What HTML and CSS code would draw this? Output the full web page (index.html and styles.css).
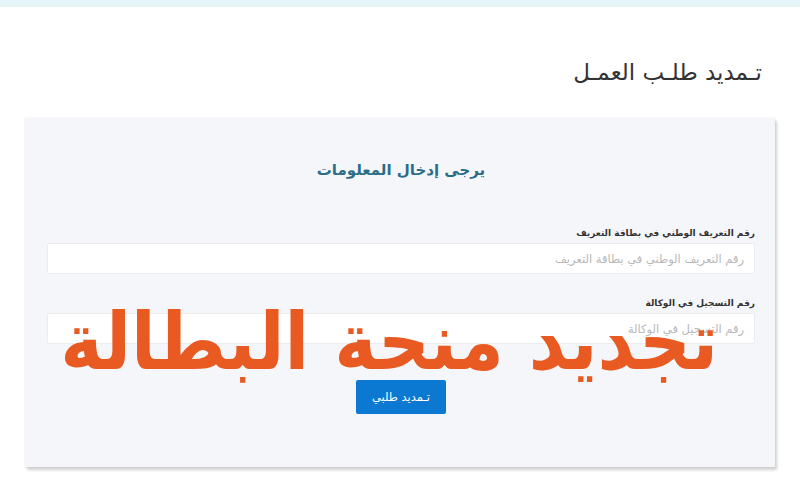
FILE: index.html
```html
<!DOCTYPE html>
<html lang="ar" dir="rtl">
<head>
<meta charset="utf-8">
<title>تمديد طلب العمل</title>
<link rel="stylesheet" href="styles.css">
</head>
<body>
<div class="topband"></div>
<main class="page">
  <h1 class="title">تـمديد طلـب العمـل</h1>
  <section class="card">
    <h2 class="card-head">يرجى إدخال المعلومات</h2>
    <div class="field">
      <label class="label">رقم التعريف الوطني في بطاقة التعريف</label>
      <input class="input" type="text" placeholder="رقم التعريف الوطني في بطاقة التعريف">
    </div>
    <div class="field field2">
      <label class="label">رقم التسجيل في الوكالة</label>
      <input class="input" type="text" placeholder="رقم التسجيل في الوكالة">
    </div>
    <div class="actions">
      <button class="btn">تـمديد طلبي</button>
    </div>
    <div class="overlay">تجديد منحة البطالة</div>
  </section>
</main>
</body>
</html>
```

FILE: styles.css
```css
* { box-sizing: border-box; }
html, body { margin: 0; padding: 0; }
body {
  background: #ffffff;
  font-family: "DejaVu Sans", "Noto Sans", sans-serif;
  width: 800px;
  height: 489px;
  overflow: hidden;
}
.topband {
  height: 7px;
  background: #e4f4f7;
}
.page {
  padding: 0 25px;
}
.title {
  margin: 52px 13px 0 0;
  font-size: 23px;
  font-weight: normal;
  color: #333;
  line-height: 26px;
  height: 59px;
}
.card {
  position: relative;
  background: #f5f6f9;
  height: 349px;
  padding: 41px 20px 0 22px;
  box-shadow: 2px 3px 3px rgba(0,0,0,0.18), 0 0 2px rgba(0,0,0,0.08);
}
.card-head {
  margin: 0;
  text-align: center;
  font-size: 15px;
  font-weight: bold;
  color: #2a6d88;
  line-height: 22px;
}
.field {
  margin-top: 45px;
  display: flex;
  flex-direction: column;
}
.field2 { margin-top: 22px; }
.label {
  font-size: 9px;
  font-weight: bold;
  color: #333;
  line-height: 14px;
  margin-bottom: 3px;
}
.input {
  height: 31px;
  border: 1px solid #ececef;
  border-radius: 2px;
  background: #fff;
  font-family: inherit;
  font-size: 11.5px;
  padding: 0 10px;
  color: #333;
}
.input::placeholder { color: #b8b8b8; }
.actions {
  display: flex;
  justify-content: center;
  margin-top: 36px;
}
.btn {
  width: 90px;
  height: 34px;
  background: #0b78d2;
  border: none;
  border-radius: 2px;
  color: #fff;
  font-family: inherit;
  font-size: 11.5px;
}
.overlay {
  position: absolute;
  left: 37px;
  top: 183px;
  width: 656px;
  text-align: center;
  font-size: 72px;
  font-weight: bold;
  color: #e95a22;
  line-height: 80px;
  white-space: nowrap;
  transform: scaleY(1.1);
}
```
